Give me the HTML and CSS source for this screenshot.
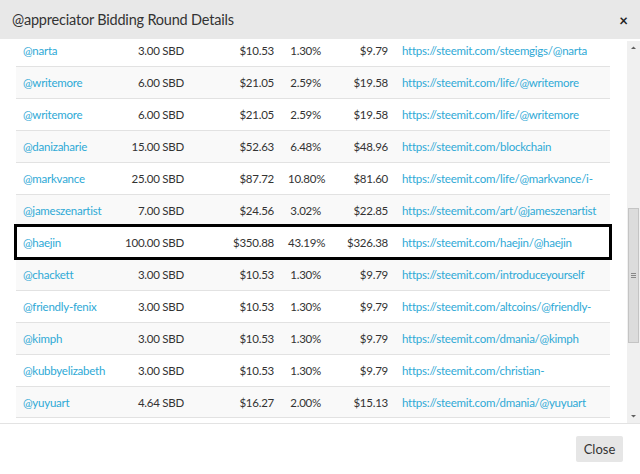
FILE: index.html
```html
<!DOCTYPE html>
<html>
<head>
<meta charset="utf-8">
<link rel="stylesheet" href="styles.css">
</head>
<body>
<div class="modal">
  <div class="modal-header">
    <h4 class="modal-title">@appreciator Bidding Round Details</h4>
    <span class="close">&times;</span>
  </div>
  <div class="modal-body">
    <div class="scroll">
      <div class="rows">
        <div class="row"><a class="c name">@narta</a><span class="c num">3.00 SBD</span><span class="c num">$10.53</span><span class="c num">1.30%</span><span class="c num">$9.79</span><a class="c url">https://steemit.com/steemgigs/@narta</a></div>
        <div class="row"><a class="c name">@writemore</a><span class="c num">6.00 SBD</span><span class="c num">$21.05</span><span class="c num">2.59%</span><span class="c num">$19.58</span><a class="c url">https://steemit.com/life/@writemore</a></div>
        <div class="row"><a class="c name">@writemore</a><span class="c num">6.00 SBD</span><span class="c num">$21.05</span><span class="c num">2.59%</span><span class="c num">$19.58</span><a class="c url">https://steemit.com/life/@writemore</a></div>
        <div class="row"><a class="c name">@danizaharie</a><span class="c num">15.00 SBD</span><span class="c num">$52.63</span><span class="c num">6.48%</span><span class="c num">$48.96</span><a class="c url">https://steemit.com/blockchain</a></div>
        <div class="row"><a class="c name">@markvance</a><span class="c num">25.00 SBD</span><span class="c num">$87.72</span><span class="c num">10.80%</span><span class="c num">$81.60</span><a class="c url">https://steemit.com/life/@markvance/i-</a></div>
        <div class="row"><a class="c name">@jameszenartist</a><span class="c num">7.00 SBD</span><span class="c num">$24.56</span><span class="c num">3.02%</span><span class="c num">$22.85</span><a class="c url">https://steemit.com/art/@jameszenartist</a></div>
        <div class="row hl"><a class="c name">@haejin</a><span class="c num">100.00 SBD</span><span class="c num">$350.88</span><span class="c num">43.19%</span><span class="c num">$326.38</span><a class="c url">https://steemit.com/haejin/@haejin</a></div>
        <div class="row"><a class="c name">@chackett</a><span class="c num">3.00 SBD</span><span class="c num">$10.53</span><span class="c num">1.30%</span><span class="c num">$9.79</span><a class="c url">https://steemit.com/introduceyourself</a></div>
        <div class="row"><a class="c name">@friendly-fenix</a><span class="c num">3.00 SBD</span><span class="c num">$10.53</span><span class="c num">1.30%</span><span class="c num">$9.79</span><a class="c url">https://steemit.com/altcoins/@friendly-</a></div>
        <div class="row"><a class="c name">@kimph</a><span class="c num">3.00 SBD</span><span class="c num">$10.53</span><span class="c num">1.30%</span><span class="c num">$9.79</span><a class="c url">https://steemit.com/dmania/@kimph</a></div>
        <div class="row"><a class="c name">@kubbyelizabeth</a><span class="c num">3.00 SBD</span><span class="c num">$10.53</span><span class="c num">1.30%</span><span class="c num">$9.79</span><a class="c url">https://steemit.com/christian-</a></div>
        <div class="row"><a class="c name">@yuyuart</a><span class="c num">4.64 SBD</span><span class="c num">$16.27</span><span class="c num">2.00%</span><span class="c num">$15.13</span><a class="c url">https://steemit.com/dmania/@yuyuart</a></div>
      </div>
    </div>
    <div class="scrollbar">
      <svg class="arrow" width="13" height="14" viewBox="0 0 13 14"><path d="M4 8 L6.5 5.5 L9 8 Z" fill="#606060"/></svg>
      <div class="track">
        <div class="thumb"><span class="grip"></span></div>
      </div>
      <svg class="arrow" width="13" height="14" viewBox="0 0 13 14"><path d="M4 6 L6.5 8.5 L9 6 Z" fill="#606060"/></svg>
    </div>
  </div>
  <div class="modal-footer">
    <button class="btn">Close</button>
  </div>
</div>
</body>
</html>
```
FILE: styles.css
```css
* { box-sizing: border-box; }
html, body { margin: 0; padding: 0; }
body {
  width: 640px;
  height: 474px;
  overflow: hidden;
  font-family: Lato, "Liberation Sans", sans-serif;
  color: #333;
  background: #fff;
}
.modal {
  display: flex;
  flex-direction: column;
  height: 474px;
}
.modal-header {
  height: 39px;
  background: #e8e8e8;
  display: flex;
  align-items: center;
  justify-content: space-between;
  padding: 0 12px 0 12px;
}
.modal-title {
  margin: 0;
  font-size: 14.5px;
  letter-spacing: -0.2px;
  font-weight: 400;
  color: #333;
}
.close {
  font-size: 15px;
  font-weight: 700;
  color: #222;
  line-height: 1;
  margin-top: 1px;
}
.modal-body {
  height: 385px;
  display: flex;
  border-bottom: 1px solid #e3e3e3;
}
.scroll {
  flex: 1;
  overflow: hidden;
  padding: 0 17px 0 16px;
}
.rows {
  margin-top: -4px;
}
.row {
  display: grid;
  grid-template-columns: 96px 79px 90px 47px 67px 1fr;
  height: 32px;
  border-top: 1px solid #e2e2e2;
  align-items: center;
  font-size: 11.5px;
  letter-spacing: -0.25px;
  background: #fff;
}
.row:nth-child(even) { background: #f9f9f9; }
.row:first-child { border-top: 0; height: 31px; }
.row:last-child { border-bottom: 1px solid #e2e2e2; }
.row.hl {
  outline: 3px solid #000;
  outline-offset: -1px;
  position: relative;
}
.c {
  padding: 0 7px;
  white-space: nowrap;
  overflow: hidden;
}
.name, .url { color: #2ea9d6; text-decoration: none; }
.num { text-align: right; }
.scrollbar {
  width: 13px;
  background: #f0f0f0;
  display: flex;
  flex-direction: column;
  margin-top: 2px;
}
.arrow { display: block; flex: none; }
.track {
  flex: 1;
  padding-top: 153px;
}
.thumb {
  width: 11px;
  margin-left: 1px;
  height: 135px;
  background: #dcdcdc;
  border: 1px solid #c4c4c4;
  display: flex;
  align-items: center;
  justify-content: center;
}
.grip {
  width: 5px;
  height: 5px;
  border-top: 1px solid #888;
  border-bottom: 1px solid #888;
  position: relative;
}
.grip::after {
  content: "";
  position: absolute;
  left: 0; right: 0; top: 1px;
  border-top: 1px solid #888;
}
.modal-footer {
  flex: 1;
  display: flex;
  justify-content: flex-end;
  align-items: flex-start;
  padding: 12px 17px 0 0;
}
.btn {
  font-family: Lato, "Liberation Sans", sans-serif;
  font-size: 13px;
  color: #333;
  background: #e6e6e6;
  border: 0;
  border-radius: 2px;
  width: 47px;
  height: 26px;
  padding: 0;
}
```
